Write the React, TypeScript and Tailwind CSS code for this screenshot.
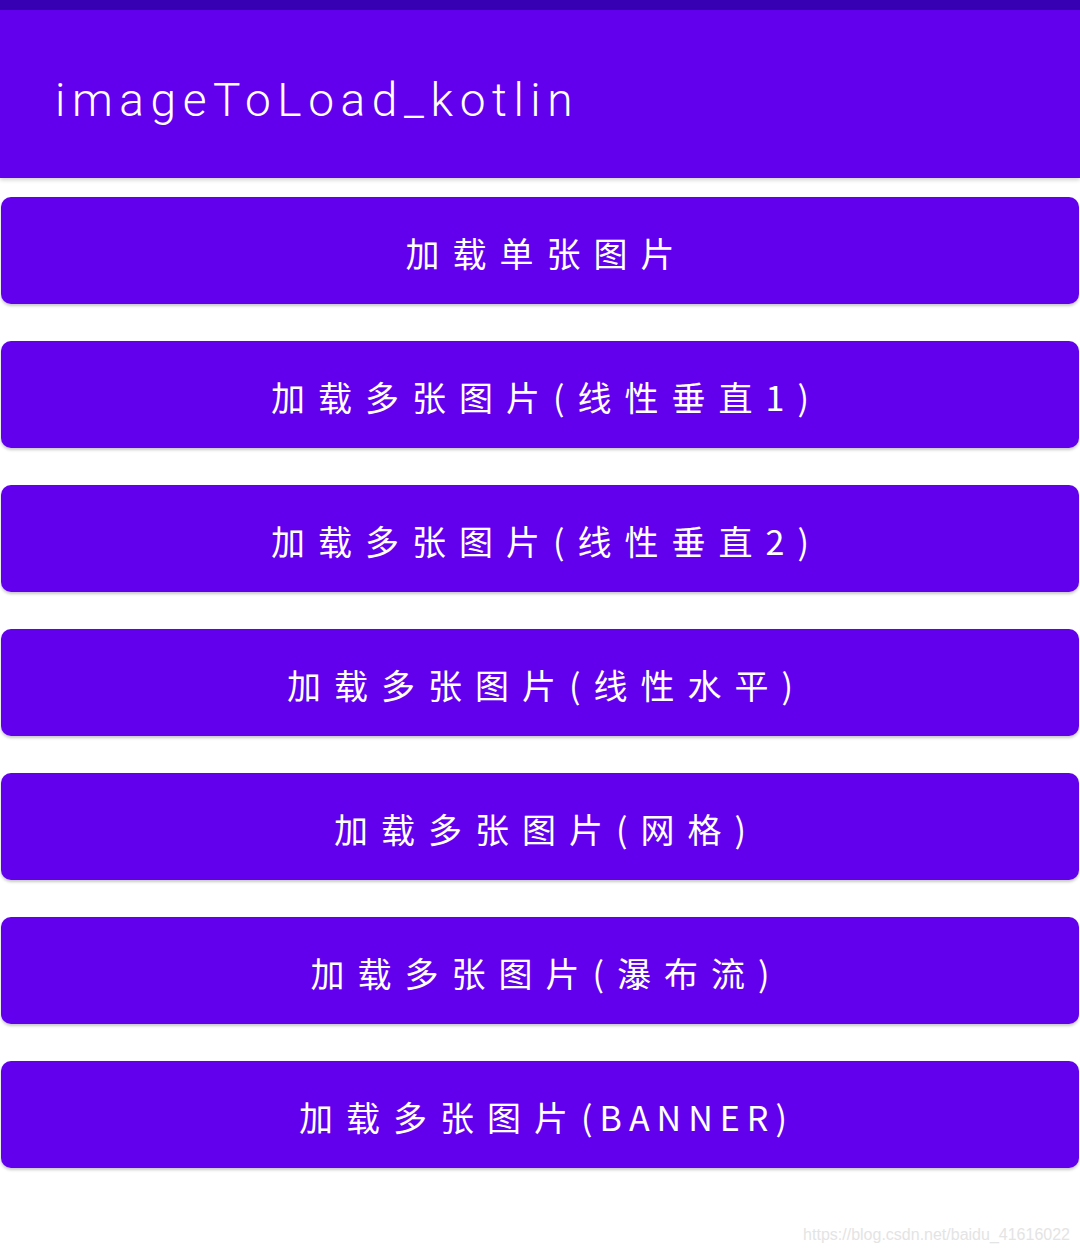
const buttons = [
  { text: '加载单张图片' },
  { text: '加载多张图片(线性垂直1)' },
  { text: '加载多张图片(线性垂直2)' },
  { text: '加载多张图片(线性水平)' },
  { text: '加载多张图片(网格)' },
  { text: '加载多张图片(瀑布流)' },
  { text: '加载多张图片', latin: '(BANNER)' },
];

const App = () => {
  return (
    <div className="relative h-[1254px] w-full bg-white overflow-hidden">
      {/* status bar + toolbar */}
      <div className="h-[10px] bg-[#3700B3]" />
      <div className="h-[168px] bg-[#6200EE] flex items-center pl-[55px] pt-[12px] shadow-[0_2px_4px_rgba(0,0,0,0.18)]">
        <span
          className="text-white text-[46px] font-light tracking-[6.6px] leading-none"
          style={{ fontFamily: 'Roboto, "Noto Sans", sans-serif' }}
        >
          imageToLoad_kotlin
        </span>
      </div>

      <div className="flex flex-col gap-[37px] pt-[19px] px-[1px]">
        {buttons.map((b) => (
          <button
            key={b.text + (b.latin ?? '')}
            className="h-[107px] w-full rounded-[10px] bg-[#6200EE] text-white flex items-center justify-center pl-[13px] pt-[5px] shadow-[0_2px_3px_rgba(0,0,0,0.22)]"
            style={{ fontFamily: '"Noto Sans CJK SC", "Noto Sans", sans-serif' }}
          >
            <span className="text-[34px] tracking-[13px] leading-none">
              {b.text}
              {b.latin && <span className="tracking-[7px]">{b.latin}</span>}
            </span>
          </button>
        ))}
      </div>

      <div
        className="absolute right-[10px] bottom-[7px] text-[16px] text-[#e4e4e4]"
        style={{ fontFamily: '"Liberation Sans", Arial, sans-serif' }}
      >
        https://blog.csdn.net/baidu_41616022
      </div>
    </div>
  );
};

export default App;
